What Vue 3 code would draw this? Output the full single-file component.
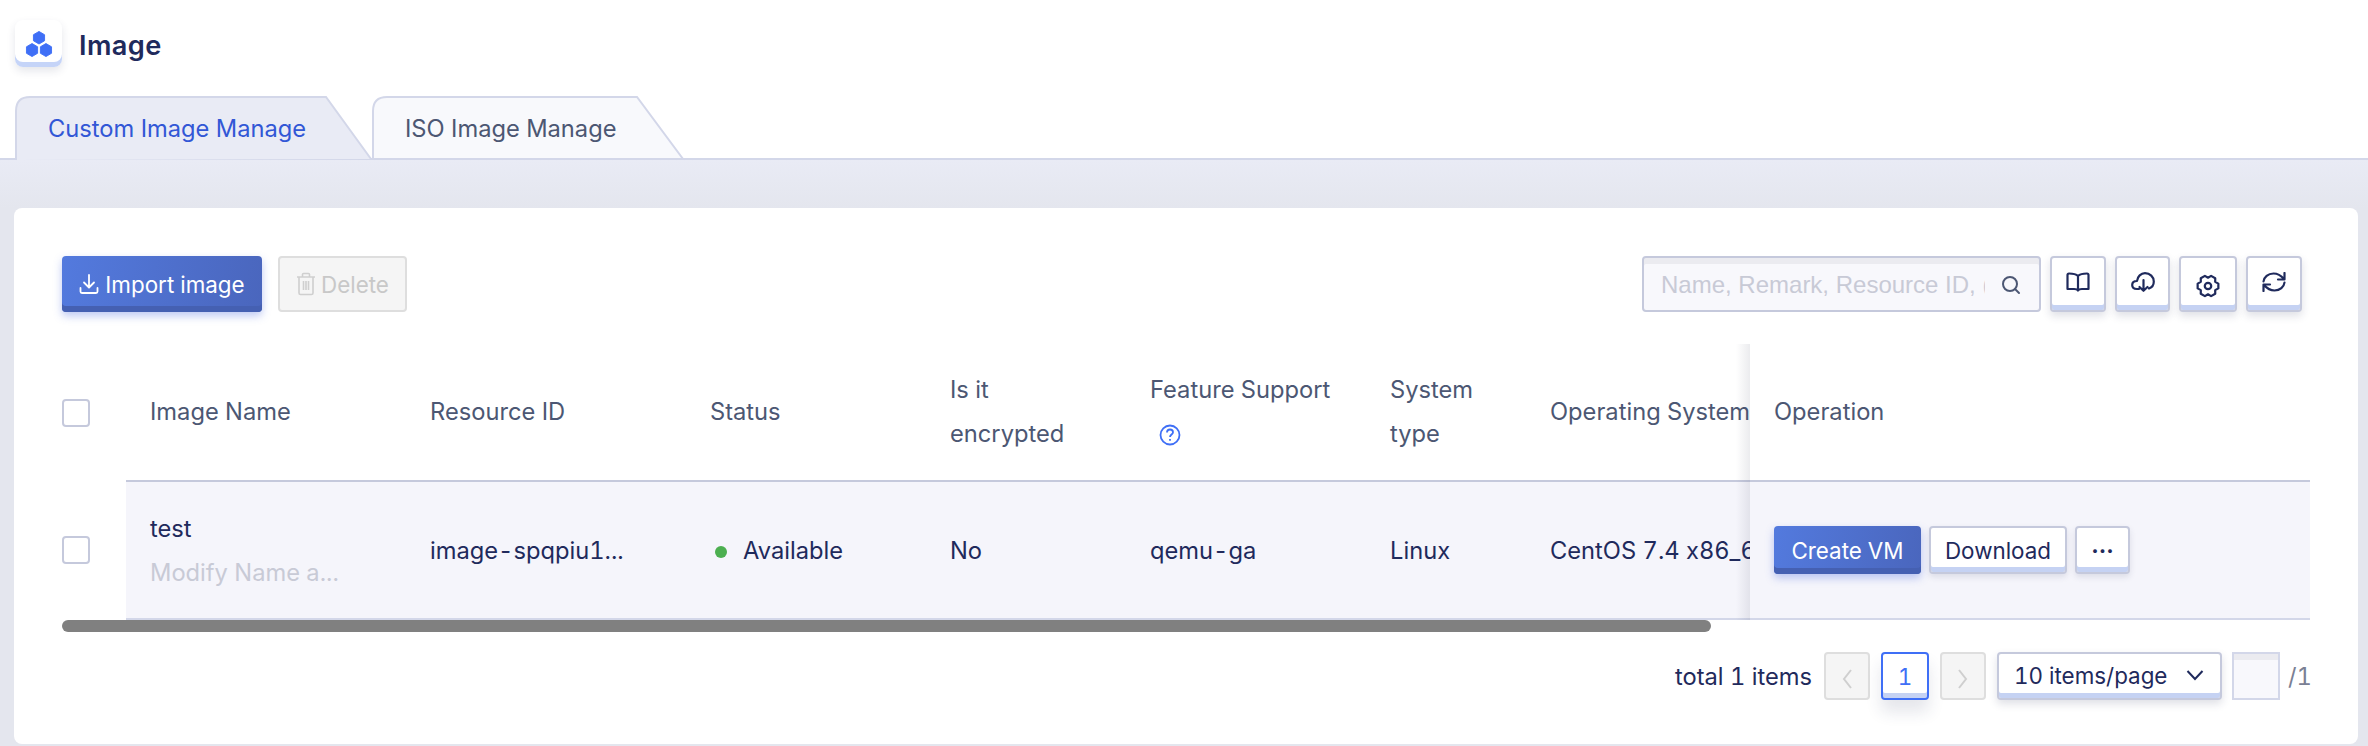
<template>
  <div class="page">
    <div class="header">
      <div class="logo">
        <svg width="28" height="26" viewBox="0 0 30 28">
          <path v-for="h in hexes" :key="h" :d="h" fill="#3f6ff6" stroke="#3f6ff6" stroke-width="1" stroke-linejoin="round" />
        </svg>
      </div>
      <div class="title">Image</div>
    </div>

    <div class="tabs">
      <div class="tab tab-active">
        <svg class="tab-shape" width="358" height="64" viewBox="0 0 358 64">
          <path d="M1 64V15Q1 1 15 1H311L356 63" fill="#e9ebf5" stroke="#d3d7e9" stroke-width="2" />
        </svg>
        <span>Custom Image Manage</span>
      </div>
      <div class="tab">
        <svg class="tab-shape" width="314" height="64" viewBox="0 0 314 64">
          <path d="M1 63V15Q1 1 15 1H265L311 63Z" fill="#f8f9fc" stroke="#d3d7e9" stroke-width="2" />
        </svg>
        <span>ISO Image Manage</span>
      </div>
    </div>

    <div class="main">
      <div class="card">
        <div class="toolbar">
          <div class="actions">
            <button class="btn primary import">
              <svg width="20" height="22" viewBox="0 0 20 22" fill="none" stroke="#fff" stroke-width="1.800" stroke-linecap="round" stroke-linejoin="round">
                <path d="M10 2v12M5 9.500l5 5 5-5M1.500 15v3.500q0 1.500 1.500 1.500h14q1.500 0 1.500-1.500V15" />
              </svg>
              Import image
            </button>
            <button class="btn disabled">
              <svg width="20" height="24" viewBox="0 0 20 24" fill="none" stroke="#cfcfcf" stroke-width="1.600" stroke-linejoin="round">
                <path d="M1 5h18M6.500 5V2.500q0-1 1-1h5q1 0 1 1V5M3 5v16q0 1.500 1.500 1.500h11q1.500 0 1.500-1.500V5M7.500 9v9M10 9v9M12.500 9v9" />
              </svg>
              Delete
            </button>
          </div>
          <div class="tools">
            <div class="search">
              <span class="placeholder">Name, Remark, Resource ID, (</span>
              <svg width="20" height="20" viewBox="0 0 20 20" fill="none" stroke="#4c5773" stroke-width="2" stroke-linecap="round">
                <circle cx="9" cy="9" r="7" />
                <path d="M14 14l4 4" />
              </svg>
            </div>
            <button class="icon-btn w56">
              <svg width="24" height="20" viewBox="0 0 24 20" fill="none" stroke="#1f2a5c" stroke-width="2.200" stroke-linejoin="round">
                <path d="M12 4C10 2 7 1.500 3 1.500Q1.500 1.500 1.500 3V17H8C10 17 11.500 17.500 12 18.500C12.500 17.500 14 17 16 17H22.500V3Q22.500 1.500 21 1.500C17 1.500 14 2 12 4ZM12 4V18" />
              </svg>
            </button>
            <button class="icon-btn w55">
              <svg width="24" height="20" viewBox="0 0 24 20" fill="none" stroke="#1f2a5c" stroke-width="2.200" stroke-linecap="round" stroke-linejoin="round">
                <path d="M8 17H6C3 17 1.200 15.200 1.200 13C1.200 10.800 3 9 6 9C6.500 4.500 10 1.200 14 1.200C19 1.200 22.800 5 22.800 9.500C22.800 13 20.800 15.500 18 16.500M12.500 8V18.500M8.500 15L12.500 18.800L16.500 15" />
              </svg>
            </button>
            <button class="icon-btn w58 gear">
              <svg width="24" height="24" viewBox="-13 -13 26 26" fill="none" stroke="#1f2a5c" stroke-width="2.400" stroke-linejoin="round">
                <path :d="gearPath" />
                <circle r="3.500" />
              </svg>
            </button>
            <button class="icon-btn w56">
              <svg width="24" height="20" viewBox="0 0 24 20" fill="none" stroke="#1f2a5c" stroke-width="2.200" stroke-linecap="round" stroke-linejoin="round">
                <path d="M1.500 9.500C2 5 6 1.500 11.500 1.500C15.500 1.500 19 3.500 22 7M22.500 1V7.500H16M22.500 10.500C22 15 18 18.500 12.500 18.500C8.500 18.500 5 16.500 2 13M1.500 19V12.500H8" />
              </svg>
            </button>
          </div>
        </div>

        <div class="table">
          <div class="col-check">
            <div class="check-cell head"><span class="checkbox"></span></div>
            <div class="check-cell body"><span class="checkbox"></span></div>
          </div>
          <div class="col-main">
            <div class="tr head">
              <div class="td name">Image Name</div>
              <div class="td rid">Resource ID</div>
              <div class="td status">Status</div>
              <div class="td enc">Is it<br />encrypted</div>
              <div class="td feat">
                Feature Support<br />
                <svg class="help" width="22" height="22" viewBox="0 0 22 22" fill="none" stroke="#3f6ff6" stroke-width="1.800">
                  <circle cx="11" cy="11" r="9.500" />
                  <path d="M8 8.500C8 6.500 9.500 5.500 11 5.500C13 5.500 14 6.800 14 8.200C14 10.500 11 10.500 11 13" />
                  <path d="M11 15v1.800" />
                </svg>
              </div>
              <div class="td sys">System<br />type</div>
              <div class="td os">Operating System</div>
            </div>
            <div class="tr body">
              <div class="td name">
                <div>test</div>
                <div class="remark">Modify Name a...</div>
              </div>
              <div class="td rid">image-spqpiu1...</div>
              <div class="td status"><i class="dot"></i>Available</div>
              <div class="td enc">No</div>
              <div class="td feat">qemu-ga</div>
              <div class="td sys">Linux</div>
              <div class="td os">CentOS 7.4 x86_64</div>
            </div>
          </div>
          <div class="col-op">
            <div class="tr head"><div class="td">Operation</div></div>
            <div class="tr body">
              <div class="td ops">
                <button class="btn primary create">Create VM</button>
                <button class="btn plain download">Download</button>
                <button class="btn plain more">···</button>
              </div>
            </div>
          </div>
        </div>

        <div class="scrollbar"></div>

        <div class="pager">
          <span class="total">total 1 items</span>
          <button class="pg off">
            <svg width="12" height="22" viewBox="0 0 12 22" fill="none" stroke="#cfcfcf" stroke-width="2"><path d="M10 2L3 11L10 20" /></svg>
          </button>
          <button class="pg current">1</button>
          <button class="pg off">
            <svg width="12" height="22" viewBox="0 0 12 22" fill="none" stroke="#cfcfcf" stroke-width="2"><path d="M2 2L9 11L2 20" /></svg>
          </button>
          <div class="size">
            <span>10 items/page</span>
            <svg width="18" height="12" viewBox="0 0 18 12" fill="none" stroke="#1f2a5c" stroke-width="2"><path d="M1.500 2L9 10L16.500 2" /></svg>
          </div>
          <div class="jump"></div>
          <span class="pages">/1</span>
        </div>
      </div>
    </div>
  </div>
</template>

<script setup>
const hexes = [
  'M15 0.500L21 4V10.500L15 14L9 10.500V4Z',
  'M7.500 13.500L13.500 17V24L7.500 27.500L1.500 24V17Z',
  'M22.500 13.500L28.500 17V24L22.500 27.500L16.500 24V17Z'
]

// six lobes, notch on top and bottom
const gearPoints = []
for (let k = 0; k < 6; k++) {
  const a = k * 60
  for (const [off, r] of [[-13, 11.5], [13, 11.5], [30, 9]]) {
    const t = ((a + off) * Math.PI) / 180
    gearPoints.push((r * Math.cos(t)).toFixed(2) + ' ' + (r * Math.sin(t)).toFixed(2))
  }
}
const gearPath = 'M' + gearPoints.join('L') + 'Z'
</script>

<style>
html, body {
  margin: 0;
  background: #fff;
}
</style>

<style scoped>
.page {
  width: 2368px;
  height: 746px;
  overflow: hidden;
  background: #fff;
  font-family: Inter, "Liberation Sans", sans-serif;
  font-size: 23.700px;
  font-feature-settings: "tnum", "calt" 0;
  color: #1f2a5c;
}
.header {
  height: 96px;
  box-sizing: border-box;
  padding: 20px 0 0 15px;
  display: flex;
  align-items: flex-start;
  gap: 17px;
}
.logo {
  width: 47px;
  height: 47px;
  border-radius: 8px;
  background: #fff;
  box-shadow: inset 0 -5px 0 #c5d4f8, 0 4px 8px rgba(40, 50, 90, 0.12);
  display: flex;
  align-items: center;
  justify-content: center;
}
.title {
  font-size: 27.200px;
  font-weight: 600;
  line-height: 52px;
  letter-spacing: 0.400px;
}
.tabs {
  height: 64px;
  box-sizing: border-box;
  padding-left: 15px;
  display: flex;
  border-bottom: 2px solid #d3d7e9;
}
.tab {
  position: relative;
  width: 357px;
  height: 64px;
  color: #4c5773;
}
.tab-shape {
  position: absolute;
  left: 0;
  top: 0;
}
.tab span {
  position: relative;
  display: block;
  line-height: 66px;
  padding-left: 33px;
}
.tab-active {
  color: #3257d6;
}
.main {
  height: 586px;
  box-sizing: border-box;
  padding: 48px 10px 2px 14px;
  background: linear-gradient(#e9ebf5, #e4e6ee 48px);
}
.card {
  height: 536px;
  box-sizing: border-box;
  padding: 48px 48px 0;
  background: #fff;
  border-radius: 8px;
}
.toolbar {
  display: flex;
  justify-content: space-between;
  height: 56px;
}
.actions {
  display: flex;
  gap: 16px;
}
.tools {
  display: flex;
  gap: 9px;
  margin-right: 8px;
}
.btn {
  font-family: inherit;
  font-size: 22.400px;
  font-feature-settings: inherit;
  box-sizing: border-box;
  border-radius: 4px;
  display: inline-flex;
  align-items: center;
  justify-content: center;
  padding: 0;
}
.primary {
  border: none;
  color: #fff;
  background: linear-gradient(100deg, #537ade, #4a66bd);
  box-shadow: inset 0 -6px 0 #4560b2, 0 4px 8px rgba(70, 100, 220, 0.35);
}
.import {
  width: 200px;
  height: 56px;
  gap: 6px;
}
.disabled {
  width: 129px;
  height: 56px;
  gap: 5px;
  border: 2px solid #dedede;
  background: #f5f5f5;
  color: #c8c8c8;
}
.search {
  width: 399px;
  height: 56px;
  box-sizing: border-box;
  border: 2px solid #c5c9dc;
  border-radius: 4px;
  background: #f8f8fc;
  box-shadow: inset 0 6px 0 #ebebf0;
  display: flex;
  align-items: center;
  justify-content: space-between;
  padding: 2px 18px 0 17px;
  font-family: "Liberation Sans", sans-serif;
  font-size: 24px;
}
.placeholder {
  color: #c8cad6;
  width: 324px;
  overflow: hidden;
  white-space: nowrap;
}
.icon-btn {
  height: 56px;
  padding: 0 0 5px;
  box-sizing: border-box;
  background: #fff;
  border: 2px solid #c5c9dc;
  border-radius: 4px;
  box-shadow: inset 0 -5px 0 #c5d2f3, 0 4px 8px rgba(40, 50, 90, 0.15);
  display: flex;
  align-items: center;
  justify-content: center;
}
.gear {
  padding: 3px 0 0;
}
.w56 { width: 56px; }
.w55 { width: 55px; }
.w58 { width: 58px; }
.table {
  margin-top: 32px;
  display: flex;
  height: 276px;
}
.col-check {
  width: 64px;
  flex: none;
}
.check-cell {
  display: flex;
  align-items: center;
}
.check-cell.head {
  height: 138px;
}
.check-cell.body {
  height: 136px;
}
.checkbox {
  width: 28px;
  height: 28px;
  box-sizing: border-box;
  border: 2px solid #c5c9dc;
  border-radius: 4px;
  background: #fff;
}
.col-main {
  width: 1624px;
  flex: none;
  overflow: hidden;
}
.col-op {
  position: relative;
  flex: 1;
  background: #fff;
}
.col-op::before {
  content: "";
  position: absolute;
  top: 0;
  bottom: 0;
  left: -14px;
  width: 14px;
  background: linear-gradient(to right, rgba(60, 65, 90, 0), rgba(60, 65, 90, 0.1));
}
.tr {
  display: flex;
  box-sizing: content-box;
}
.tr.head {
  height: 136px;
  border-bottom: 2px solid #c5c9dc;
  color: #4c5773;
}
.tr.body {
  height: 136px;
  border-bottom: 2px solid #d3d7e9;
  background: #f5f5fb;
}
.tr.body .td:not(.ops) {
  padding-top: 2px;
}
.td {
  flex: none;
  box-sizing: border-box;
  padding-left: 25px;
  white-space: nowrap;
  line-height: 44px;
  align-self: center;
}
.name {
  width: 279px;
  padding-left: 24px;
}
.rid { width: 280px; }
.status { width: 240px; }
.enc { width: 200px; }
.feat { width: 240px; }
.sys { width: 160px; }
.os { width: 225px; }
.help {
  margin-left: 9px;
  vertical-align: -4px;
}
.remark {
  color: #c8cad6;
}
.dot {
  display: inline-block;
  width: 12px;
  height: 12px;
  margin: 0 16px 1px 5px;
  border-radius: 50%;
  background: #4caf50;
}
.col-op .td {
  padding-left: 24px;
}
.ops {
  display: flex;
  gap: 8px;
  align-items: center;
}
.create {
  width: 147px;
  height: 48px;
}
.plain {
  height: 48px;
  border: 2px solid #c5c9dc;
  background: #fff;
  color: #1f2a5c;
  box-shadow: inset 0 -5px 0 #c5d2f3, 0 3px 6px rgba(40, 50, 90, 0.12);
}
.download { width: 138px; }
.more {
  width: 55px;
  font-weight: 700;
}
.scrollbar {
  width: 1649px;
  height: 12px;
  background: #808080;
  border-radius: 6px;
}
.pager {
  margin-top: 20px;
  display: flex;
  align-items: center;
  justify-content: flex-end;
  height: 48px;
}
.total {
  margin-right: 12px;
}
.pg {
  width: 46px;
  height: 48px;
  box-sizing: border-box;
  border-radius: 4px;
  padding: 0;
  display: flex;
  align-items: center;
  justify-content: center;
  font-family: inherit;
  font-size: 22.400px;
  font-feature-settings: inherit;
}
.off {
  background: #f5f5f5;
  border: 2px solid #dedede;
  padding-top: 5px;
}
.current {
  width: 48px;
  margin: 0 11px;
  background: #fff;
  border: 2px solid #3f6ff6;
  color: #3f6ff6;
  box-shadow: inset 0 -5px 0 #c5d2f3, 0 12px 16px rgba(40, 50, 90, 0.12);
}
.size {
  width: 225px;
  height: 48px;
  margin-left: 11px;
  box-sizing: border-box;
  border: 2px solid #c5c9dc;
  border-radius: 4px;
  background: #fff;
  box-shadow: inset 0 -5px 0 #c5d2f3, 0 4px 8px rgba(40, 50, 90, 0.15);
  display: flex;
  align-items: center;
  justify-content: space-between;
  padding: 0 16px 2px 15px;
  font-size: 22.400px;
}
.jump {
  width: 48px;
  height: 48px;
  margin-left: 10px;
  box-sizing: border-box;
  border: 2px solid #d3d7e9;
  background: #f8f8fc;
  box-shadow: inset 0 6px 0 #ebebf0;
}
.pages {
  width: 22px;
  margin-left: 8px;
  color: #7a8094;
  white-space: nowrap;
}
</style>
